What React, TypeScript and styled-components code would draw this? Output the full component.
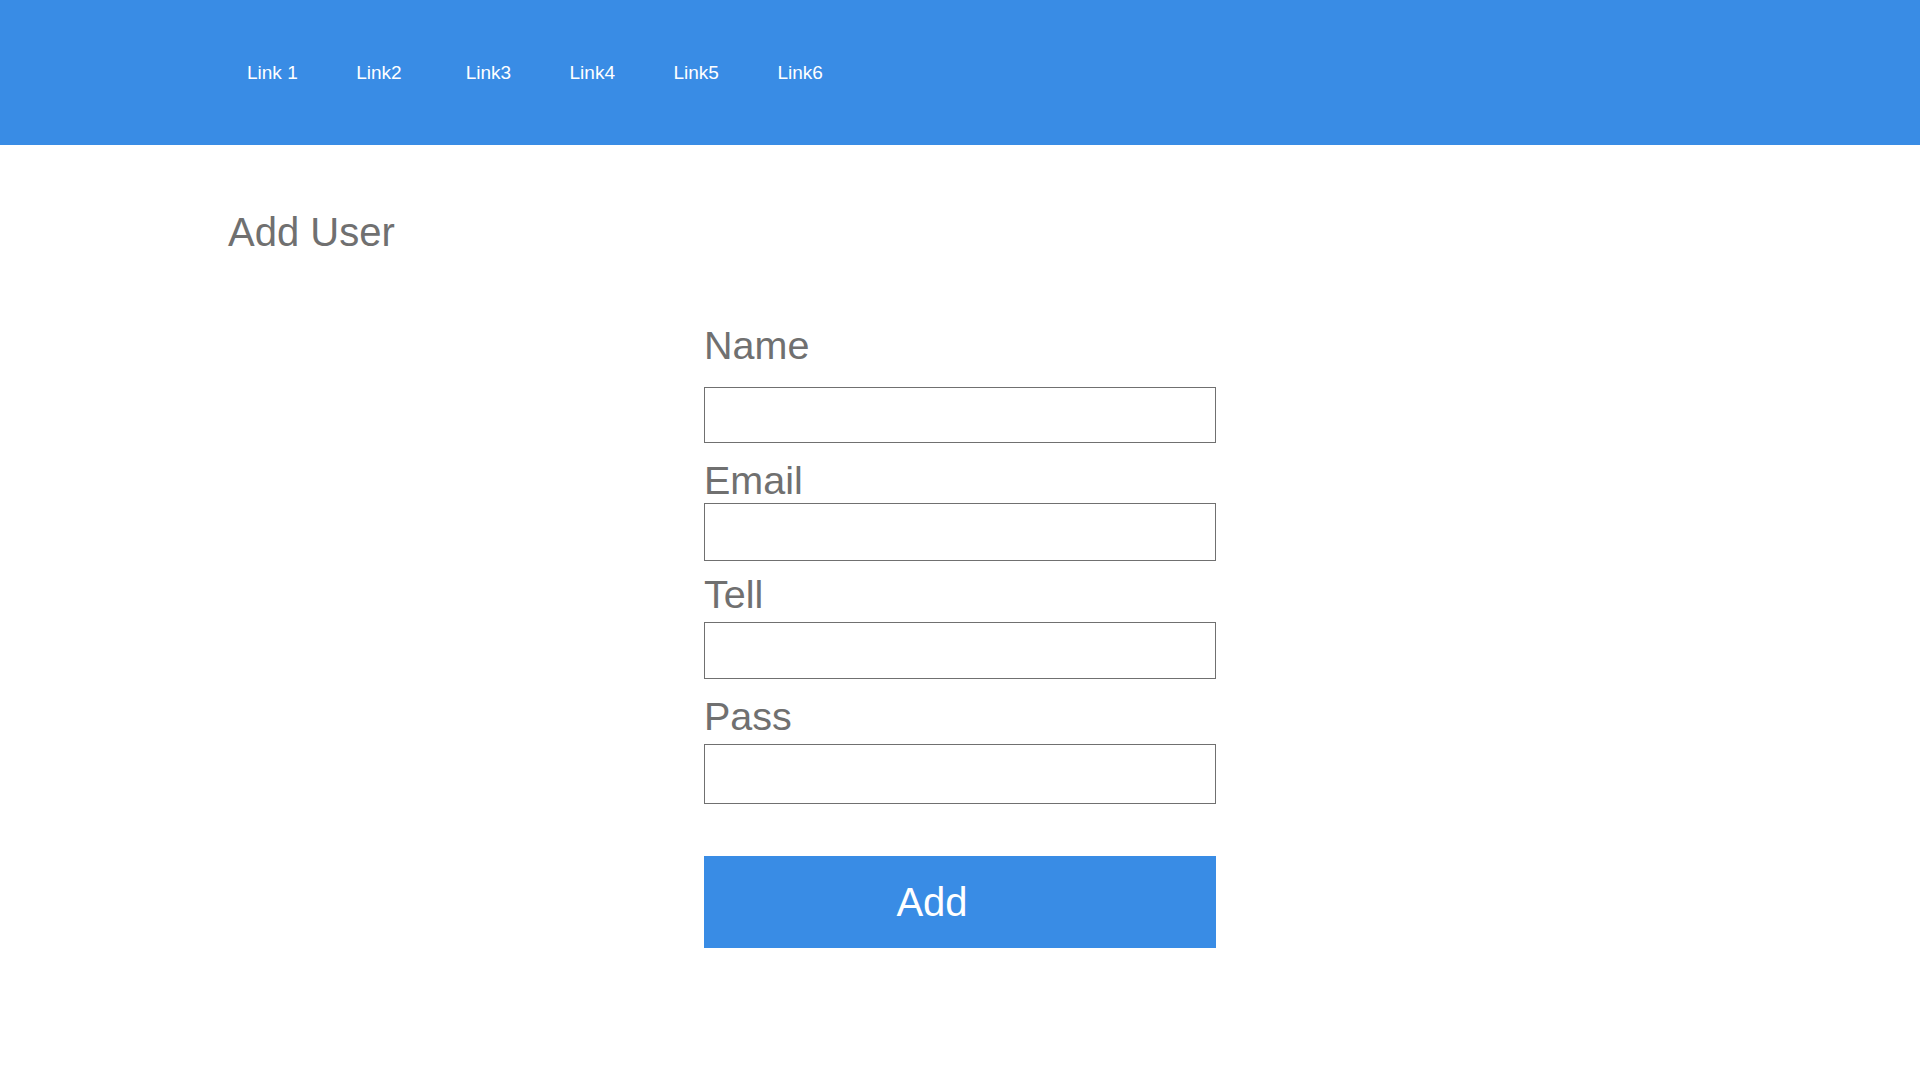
import React from "react";
import styled, { createGlobalStyle } from "styled-components";

const BLUE = "#398ce5";
const GREY = "#707070";

const GlobalStyle = createGlobalStyle`
  * {
    box-sizing: border-box;
  }
  body {
    margin: 0;
    background: #ffffff;
    font-family: "Liberation Sans", Arial, Helvetica, sans-serif;
  }
`;

const Header = styled.header`
  height: 145px;
  background-color: ${BLUE};
  display: flex;
  align-items: center;
  padding-left: 247px;
`;

const Nav = styled.nav`
  display: flex;
  align-items: center;
  gap: 58.5px;
`;

const NavLink = styled.a<{ $push?: number }>`
  margin-left: ${({ $push }) => $push ?? 0}px;
  font-size: 19px;
  line-height: 20px;
  color: #ffffff;
  text-decoration: none;
  cursor: pointer;
`;

const Main = styled.main`
  padding: 67px 0 0 228px;
`;

const Title = styled.h1`
  margin: 0;
  font-size: 40px;
  line-height: 40px;
  font-weight: 400;
  color: ${GREY};
`;

const Form = styled.form`
  width: 512px;
  margin: 74px 0 0 476px;
  display: flex;
  flex-direction: column;
`;

const Field = styled.div<{ $top: number }>`
  display: flex;
  flex-direction: column;
  margin-top: ${({ $top }) => $top}px;
`;

const Label = styled.label<{ $space: number }>`
  display: block;
  margin-bottom: ${({ $space }) => $space}px;
  font-size: 39.5px;
  line-height: 38px;
  color: ${GREY};
`;

const Input = styled.input<{ $height: number }>`
  width: 100%;
  height: ${({ $height }) => $height}px;
  border: 1px solid ${GREY};
  border-radius: 0;
  padding: 0 12px;
  font-size: 20px;
  font-family: inherit;
  color: ${GREY};
  background: #ffffff;
  outline: none;
`;

const AddButton = styled.button`
  width: 100%;
  height: 92px;
  margin-top: 52px;
  border: none;
  border-radius: 0;
  background-color: ${BLUE};
  color: #ffffff;
  font-family: inherit;
  font-size: 40px;
  text-align: center;
  padding: 0 56px 0 0;
  cursor: pointer;
`;

const links = [
  { label: "Link 1" },
  { label: "Link2" },
  { label: "Link3", push: 5.5 },
  { label: "Link4" },
  { label: "Link5" },
  { label: "Link6" },
];

const fields = [
  { name: "Name", type: "text", top: 0, space: 23, height: 56 },
  { name: "Email", type: "email", top: 18, space: 4, height: 58 },
  { name: "Tell", type: "tel", top: 14, space: 9, height: 57 },
  { name: "Pass", type: "password", top: 18, space: 9, height: 60 },
];

const App = () => {
  return (
    <>
      <GlobalStyle />
      <Header>
        <Nav>
          {links.map((link) => (
            <NavLink key={link.label} $push={link.push}>
              {link.label}
            </NavLink>
          ))}
        </Nav>
      </Header>
      <Main>
        <Title>Add User</Title>
        <Form onSubmit={(e) => e.preventDefault()}>
          {fields.map((field) => (
            <Field key={field.name} $top={field.top}>
              <Label $space={field.space} htmlFor={field.name}>
                {field.name}
              </Label>
              <Input id={field.name} type={field.type} $height={field.height} />
            </Field>
          ))}
          <AddButton type="submit">Add</AddButton>
        </Form>
      </Main>
    </>
  );
};

export default App;
